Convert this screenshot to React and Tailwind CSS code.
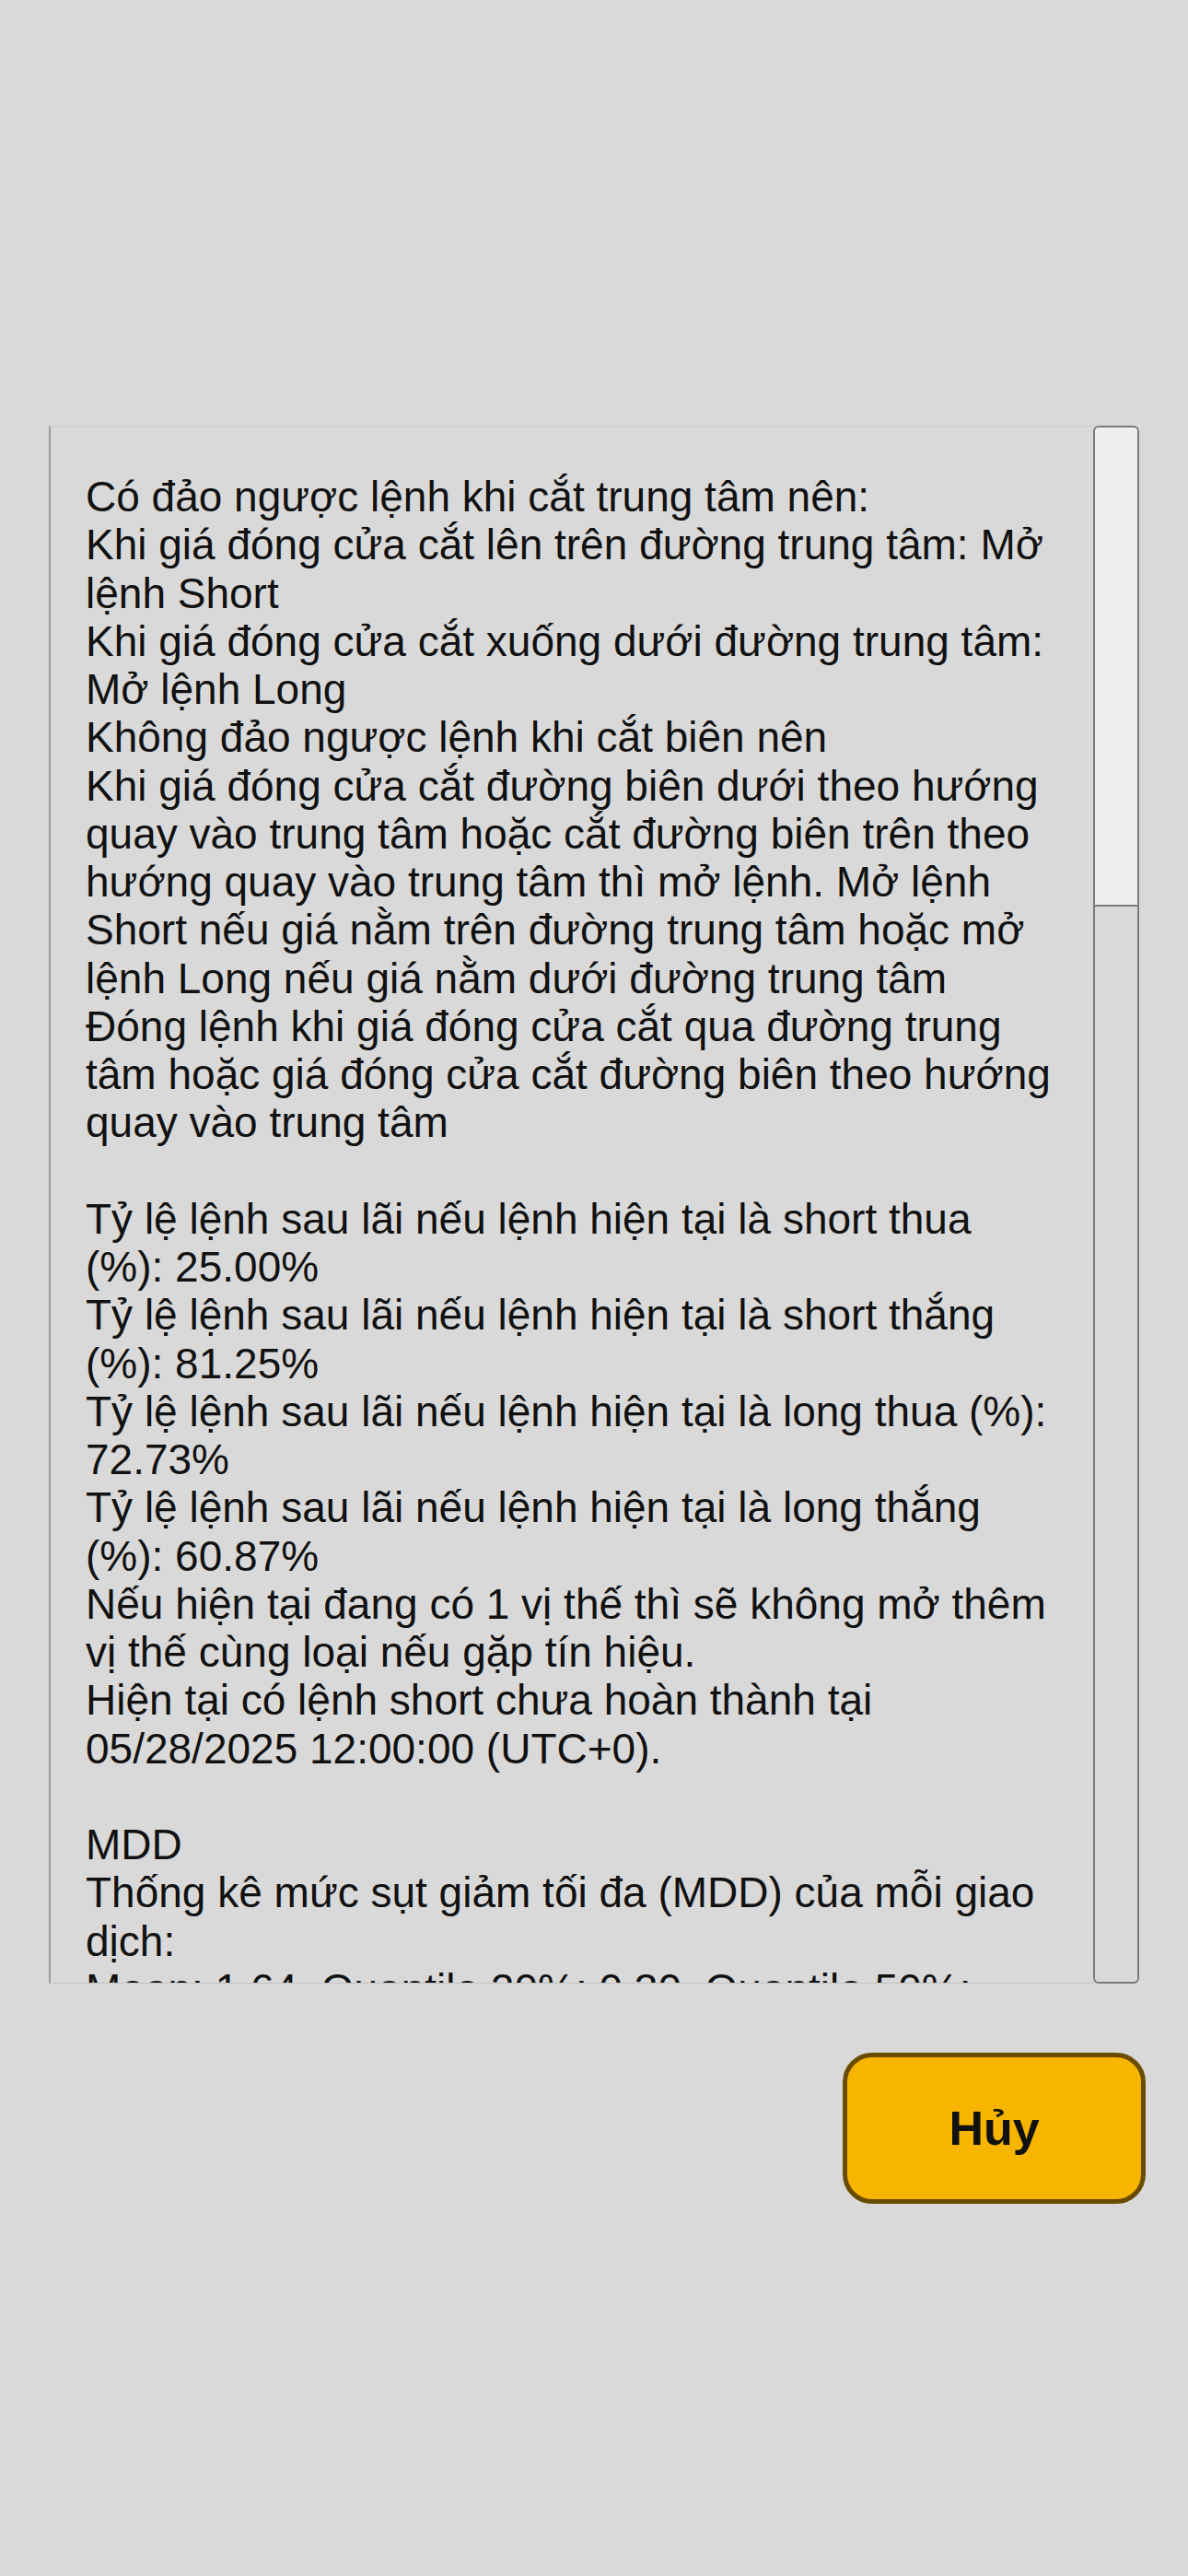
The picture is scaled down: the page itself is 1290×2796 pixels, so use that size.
import React from 'react';

const lines = [
  'Có đảo ngược lệnh khi cắt trung tâm nên:',
  'Khi giá đóng cửa cắt lên trên đường trung tâm: Mở',
  'lệnh Short',
  'Khi giá đóng cửa cắt xuống dưới đường trung tâm:',
  'Mở lệnh Long',
  'Không đảo ngược lệnh khi cắt biên nên',
  'Khi giá đóng cửa cắt đường biên dưới theo hướng',
  'quay vào trung tâm hoặc cắt đường biên trên theo',
  'hướng quay vào trung tâm thì mở lệnh. Mở lệnh',
  'Short nếu giá nằm trên đường trung tâm hoặc mở',
  'lệnh Long nếu giá nằm dưới đường trung tâm',
  'Đóng lệnh khi giá đóng cửa cắt qua đường trung',
  'tâm hoặc giá đóng cửa cắt đường biên theo hướng',
  'quay vào trung tâm',
  '',
  'Tỷ lệ lệnh sau lãi nếu lệnh hiện tại là short thua',
  '(%): 25.00%',
  'Tỷ lệ lệnh sau lãi nếu lệnh hiện tại là short thắng',
  '(%): 81.25%',
  'Tỷ lệ lệnh sau lãi nếu lệnh hiện tại là long thua (%):',
  '72.73%',
  'Tỷ lệ lệnh sau lãi nếu lệnh hiện tại là long thắng',
  '(%): 60.87%',
  'Nếu hiện tại đang có 1 vị thế thì sẽ không mở thêm',
  'vị thế cùng loại nếu gặp tín hiệu.',
  'Hiện tại có lệnh short chưa hoàn thành tại',
  '05/28/2025 12:00:00 (UTC+0).',
  '',
  'MDD',
  'Thống kê mức sụt giảm tối đa (MDD) của mỗi giao',
  'dịch:',
  'Mean: 1.64, Quantile 20%: 0.30, Quantile 50%:',
  '0.95, Quantile 80%: 2.41',
];

export default function App() {
  return (
    <div
      className="min-h-[2796px] w-[1290px] bg-[#d9d9d9] flex flex-col"
      style={{ fontFamily: '"Liberation Sans", Arial, sans-serif' }}
    >
      <div className="h-[462px]" />
      <div className="flex pl-[53px]">
        <div className="w-[1134px] h-[1691px] overflow-hidden border-l-2 border-l-[#9a9a9a] border-t border-t-[#cfcfcf] border-b border-b-[#c4c4c4] pt-[50px] pl-[38px] text-[46px] leading-[52.25px] text-[#111]">
          {lines.map((l, i) => (
            <div key={i} className="whitespace-nowrap h-[52.25px]">
              {l}
            </div>
          ))}
        </div>
        <div className="w-[50px] h-[1691px] flex flex-col">
          <div className="h-[522px] bg-[#efefef] border-2 border-[#7a7a7a] rounded-t-[6px]" />
          <div className="flex-1 bg-[#d9d9d9] border-2 border-t-0 border-[#7a7a7a] rounded-b-[6px]" />
        </div>
      </div>
      <div className="flex justify-end pr-[46px] pt-[75px]">
        <button className="w-[329px] h-[164px] bg-[#f8b500] border-[5px] border-[#6a4c00] rounded-[32px] flex items-center justify-center text-[52px] font-bold text-[#111]">
          Hủy
        </button>
      </div>
    </div>
  );
}
